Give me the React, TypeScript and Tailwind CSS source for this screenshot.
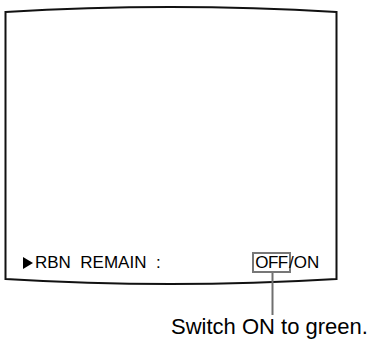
export default function App() {
  return (
    <div className="relative w-[370px] h-[343px] bg-white text-black" style={{ fontFamily: '"Liberation Sans", Arial, sans-serif' }}>
      {/* screen frame + callout line */}
      <svg className="absolute top-0 left-0" width="370" height="343" viewBox="0 0 370 343">
        <path d="M5.5 12 Q170 2 336.5 12 L336.5 279 Q170 289 5.5 279 Z" fill="none" stroke="#111" strokeWidth="2" />
        <line x1="272.5" y1="273" x2="272.5" y2="315" stroke="#6f6f6f" strokeWidth="2" />
      </svg>

      <div className="relative flex flex-col pt-[252px]">
        <div className="flex items-center h-[21px] pl-[23px] text-[17px] leading-none">
          <svg width="10" height="12" viewBox="0 0 10 12" className="mr-[2px]">
            <path d="M0 0 L10 6 L0 12 Z" fill="#000" />
          </svg>
          <span className="w-[217px] whitespace-pre">RBN  REMAIN  :</span>
          <span className="flex items-center justify-center w-[39px] h-[21px] border-2 border-[#777] tracking-[-0.5px]">OFF</span>
          <span className="-ml-[2px]">/ON</span>
        </div>
        <div className="pl-[171px] mt-[43px] text-[22px] leading-none">Switch ON to green.</div>
      </div>
    </div>
  );
}
